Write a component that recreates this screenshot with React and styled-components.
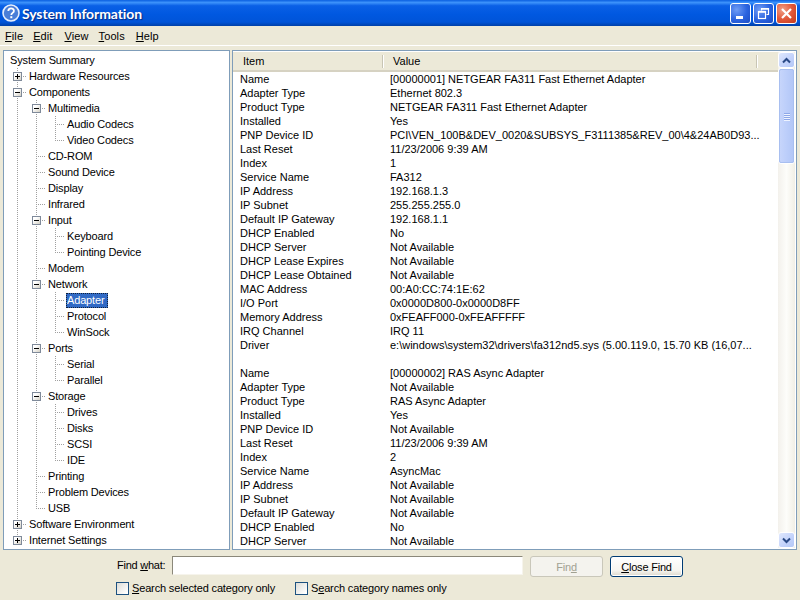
import React from 'react';
import styled, { createGlobalStyle } from 'styled-components';

const GlobalStyle = createGlobalStyle`
  html, body {
    margin: 0;
    padding: 0;
    height: 100%;
    overflow: hidden;
  }
  body {
    font-family: "Liberation Sans", Arial, sans-serif;
    font-size: 11px;
    color: #000;
    background: #ece9d8;
  }
`;

const Win = styled.div`
  width: 800px;
  height: 600px;
  display: flex;
  flex-direction: column;
  background: #ece9d8;
  overflow: hidden;
`;

const TitleBar = styled.div`
  height: 26px;
  flex: none;
  display: flex;
  align-items: center;
  padding: 0 3px 0 2px;
  box-sizing: border-box;
  background: linear-gradient(180deg, #0a5fe0 0%, #3d93fb 10%, #0a60e6 22%, #0058e0 55%, #0054d8 85%, #0040a8 100%);
`;

const TitleText = styled.span`
  margin-left: 2px;
  color: #fff;
  font-family: Lato, "Open Sans", sans-serif;
  font-weight: 700;
  font-size: 14px;
  letter-spacing: -0.1px;
  text-shadow: 1px 1px 1px #0a2a80;
  flex: 1;
`;

const WinButton = styled.div`
  width: 21px;
  height: 21px;
  margin-left: 2px;
  box-sizing: border-box;
  border: 1px solid #fff;
  border-radius: 3px;
  display: flex;
  align-items: center;
  justify-content: center;
  background: ${p => (p.$close
    ? 'radial-gradient(circle at 30% 30%, #f0a088 0%, #e2583a 50%, #c23a1c 100%)'
    : 'radial-gradient(circle at 30% 30%, #6f9cf5 0%, #2a63df 55%, #1c4cc4 100%)')};
`;

const MenuBar = styled.div`
  height: 19px;
  flex: none;
  display: flex;
  align-items: center;
  padding-left: 5px;
  border-bottom: 1px solid #fff;
`;

const MenuItem = styled.span`
  margin-right: ${p => p.$gap}px;
  letter-spacing: 0.1px;
  u { text-underline-offset: 1px; }
`;

const Main = styled.div`
  height: 504px;
  flex: none;
  display: flex;
  padding: 4px 3px 0 3px;
  box-sizing: border-box;
  gap: 2px;
`;

const Panel = styled.div`
  background: #fff;
  border: 1px solid #7f9db9;
  box-sizing: border-box;
  height: 500px;
  overflow: hidden;
`;

const TreePanel = styled(Panel)`
  width: 227px;
  flex: none;
  padding-top: 1px;
`;

const ListPanel = styled(Panel)`
  flex: 1;
  display: flex;
  padding: 1px 1px 1px 0;
`;

const TreeRow = styled.div`
  height: 16px;
  display: flex;
  align-items: stretch;
  padding-left: 4px;
`;

const Cell = styled.div`
  width: 19px;
  flex: none;
  position: relative;
  background-repeat: no-repeat;
  background-image:
    ${p => (p.$line ? 'repeating-linear-gradient(180deg, #a0a0a0 0 1px, transparent 1px 2px)' : 'none')},
    ${p => (p.$stub ? 'repeating-linear-gradient(90deg, #a0a0a0 0 1px, transparent 1px 2px)' : 'none')};
  background-size: 1px ${p => (p.$half ? '9px' : '16px')}, 10px 1px;
  background-position: 9px 0, 9px 8px;
`;

const Expander = styled.div`
  position: absolute;
  left: 5px;
  top: 4px;
  width: 9px;
  height: 9px;
  box-sizing: border-box;
  border: 1px solid #7f8a9a;
  background: linear-gradient(135deg, #fff 30%, #d4d0c4 100%);
  &::before {
    content: "";
    position: absolute;
    left: 1px;
    top: 3px;
    width: 5px;
    height: 1px;
    background: #000;
  }
  &::after {
    content: "";
    display: ${p => (p.$open ? 'none' : 'block')};
    position: absolute;
    left: 3px;
    top: 1px;
    width: 1px;
    height: 5px;
    background: #000;
  }
`;

const TreeLabel = styled.span`
  align-self: center;
  height: 14px;
  line-height: 14px;
  padding: 0 2px;
  white-space: nowrap;
  box-sizing: border-box;
  letter-spacing: -0.15px;
  ${p => p.$selected && `
    background: #316ac5;
    color: #fff;
    height: 15px;
    margin-left: 1px;
    padding: 0 4px 0 1px;
    outline: 1px dotted #10203a;
    outline-offset: -1px;
  `}
`;

const ListBody = styled.div`
  flex: 1;
  overflow: hidden;
  min-width: 0;
`;

const Header = styled.div`
  height: 17px;
  display: flex;
  background: #ece9d8;
  border-bottom: 2px solid #d6d2c2;
  padding-top: 1px;
`;

const HeaderCell = styled.div`
  width: ${p => p.$width}px;
  flex: none;
  box-sizing: border-box;
  padding-left: ${p => p.$pad}px;
  line-height: 17px;
  position: relative;
  &::after {
    content: "";
    position: absolute;
    right: 0;
    top: 2px;
    bottom: 2px;
    width: 1px;
    background: #c8c5b4;
    box-shadow: 1px 0 0 #fff;
  }
`;

const Row = styled.div`
  height: 14px;
  line-height: 14px;
  display: flex;
  white-space: nowrap;
`;

const ItemCell = styled.div`
  width: 157px;
  flex: none;
  padding-left: 7px;
  box-sizing: border-box;
`;

const ValueCell = styled.div`
  flex: 1;
  min-width: 0;
`;

const ScrollBar = styled.div`
  width: 17px;
  flex: none;
  display: flex;
  flex-direction: column;
  background: linear-gradient(90deg, #f3f1ec 0%, #fdfdfa 50%, #f1efe6 100%);
`;

const ScrollButton = styled.div`
  height: 16px;
  flex: none;
  box-sizing: border-box;
  border: 1px solid #fff;
  border-radius: 3px;
  display: flex;
  align-items: center;
  justify-content: center;
  background: linear-gradient(135deg, #e0e8fd 0%, #c2d2fb 60%, #b4c8f6 100%);
`;

const ScrollThumb = styled.div`
  height: 96px;
  flex: none;
  box-sizing: border-box;
  border: 1px solid #fff;
  outline: 1px solid #a8bff0;
  outline-offset: -2px;
  border-radius: 3px;
  display: flex;
  flex-direction: column;
  align-items: center;
  justify-content: center;
  gap: 1px;
  background: linear-gradient(90deg, #c8d6fb 0%, #bccefa 50%, #b2c6f6 100%);
`;

const Grip = styled.span`
  width: 6px;
  height: 1px;
  background: #8ea8e8;
  box-shadow: 0 1px 0 #eef3ff;
`;

const ScrollTrack = styled.div`
  flex: 1;
`;

const FindArea = styled.div`
  flex: 1;
  display: flex;
  flex-direction: column;
  padding: 6px 0 0 116px;
  box-sizing: border-box;
`;

const FindRow = styled.div`
  display: flex;
  align-items: center;
  height: 21px;
`;

const FindLabel = styled.label`
  width: 56px;
  flex: none;
  padding-left: 1px;
  margin-top: -3px;
  white-space: nowrap;
  box-sizing: border-box;
  letter-spacing: -0.25px;
`;

const FindInput = styled.div`
  width: 351px;
  height: 19px;
  align-self: flex-start;
  box-sizing: border-box;
  background: #fff;
  border: 1px solid #f6f4ec;
  border-top: 1px solid #8b887a;
  border-left: 1px solid #8b887a;
  margin-right: 7px;
`;

const Button = styled.div`
  width: 73px;
  height: 21px;
  margin-right: 7px;
  box-sizing: border-box;
  border-radius: 3px;
  display: flex;
  align-items: center;
  justify-content: center;
  letter-spacing: -0.2px;
  ${p => (p.$disabled
    ? `
    border: 1px solid #c9c7ba;
    background: #f4f3ee;
    color: #a1a192;
  `
    : `
    border: 1px solid #003c74;
    background: linear-gradient(180deg, #fff 0%, #f6f5f0 70%, #dcd8cc 100%);
    box-shadow: inset 0 0 0 1px #fff;
  `)}
`;

const CheckRow = styled.div`
  display: flex;
  align-items: center;
  height: 14px;
  margin-top: 4px;
`;

const CheckBox = styled.span`
  width: 13px;
  height: 13px;
  flex: none;
  box-sizing: border-box;
  border: 1px solid #1c5180;
  background: linear-gradient(135deg, #dcdcd7 0%, #fff 90%);
  margin-right: 3px;
`;

const CheckLabel = styled.span`
  width: ${p => p.$width}px;
  flex: none;
  white-space: nowrap;
  letter-spacing: -0.15px;
`;

const tree = [
  { label: 'Hardware Resources' },
  {
    label: 'Components',
    open: true,
    children: [
      { label: 'Multimedia', open: true, children: [{ label: 'Audio Codecs' }, { label: 'Video Codecs' }] },
      { label: 'CD-ROM' },
      { label: 'Sound Device' },
      { label: 'Display' },
      { label: 'Infrared' },
      { label: 'Input', open: true, children: [{ label: 'Keyboard' }, { label: 'Pointing Device' }] },
      { label: 'Modem' },
      {
        label: 'Network',
        open: true,
        children: [{ label: 'Adapter', selected: true }, { label: 'Protocol' }, { label: 'WinSock' }]
      },
      { label: 'Ports', open: true, children: [{ label: 'Serial' }, { label: 'Parallel' }] },
      {
        label: 'Storage',
        open: true,
        children: [{ label: 'Drives' }, { label: 'Disks' }, { label: 'SCSI' }, { label: 'IDE' }]
      },
      { label: 'Printing' },
      { label: 'Problem Devices' },
      { label: 'USB' }
    ]
  },
  { label: 'Software Environment' },
  { label: 'Internet Settings' }
];

const details = [
  ['Name', '[00000001] NETGEAR FA311 Fast Ethernet Adapter'],
  ['Adapter Type', 'Ethernet 802.3'],
  ['Product Type', 'NETGEAR FA311 Fast Ethernet Adapter'],
  ['Installed', 'Yes'],
  ['PNP Device ID', 'PCI\\VEN_100B&DEV_0020&SUBSYS_F3111385&REV_00\\4&24AB0D93...'],
  ['Last Reset', '11/23/2006 9:39 AM'],
  ['Index', '1'],
  ['Service Name', 'FA312'],
  ['IP Address', '192.168.1.3'],
  ['IP Subnet', '255.255.255.0'],
  ['Default IP Gateway', '192.168.1.1'],
  ['DHCP Enabled', 'No'],
  ['DHCP Server', 'Not Available'],
  ['DHCP Lease Expires', 'Not Available'],
  ['DHCP Lease Obtained', 'Not Available'],
  ['MAC Address', '00:A0:CC:74:1E:62'],
  ['I/O Port', '0x0000D800-0x0000D8FF'],
  ['Memory Address', '0xFEAFF000-0xFEAFFFFF'],
  ['IRQ Channel', 'IRQ 11'],
  ['Driver', 'e:\\windows\\system32\\drivers\\fa312nd5.sys (5.00.119.0, 15.70 KB (16,07...'],
  ['', ''],
  ['Name', '[00000002] RAS Async Adapter'],
  ['Adapter Type', 'Not Available'],
  ['Product Type', 'RAS Async Adapter'],
  ['Installed', 'Yes'],
  ['PNP Device ID', 'Not Available'],
  ['Last Reset', '11/23/2006 9:39 AM'],
  ['Index', '2'],
  ['Service Name', 'AsyncMac'],
  ['IP Address', 'Not Available'],
  ['IP Subnet', 'Not Available'],
  ['Default IP Gateway', 'Not Available'],
  ['DHCP Enabled', 'No'],
  ['DHCP Server', 'Not Available']
];

function renderNodes(nodes, guides) {
  return nodes.flatMap((node, i) => {
    const last = i === nodes.length - 1;
    const hasBox = !!node.children || guides.length === 0;
    const row = (
      <TreeRow key={`${guides.length}-${node.label}`}>
        {guides.map((on, g) => (
          <Cell key={g} $line={on} />
        ))}
        <Cell $line $stub $half={last}>
          {hasBox && <Expander $open={node.open} />}
        </Cell>
        <TreeLabel $selected={node.selected}>{node.label}</TreeLabel>
      </TreeRow>
    );
    const kids = node.children ? renderNodes(node.children, [...guides, !last]) : [];
    return [row, ...kids];
  });
}

function HelpIcon() {
  return (
    <svg width="18" height="18" viewBox="0 0 18 18">
      <circle cx="9" cy="9" r="8" fill="#4a7ed8" stroke="#e6eefc" strokeWidth="1.6" />
      <path d="M6.3 7c0-3.4 5.6-3.4 5.6-.1 0 2-2.6 2-2.6 4" fill="none" stroke="#fff" strokeWidth="1.8" />
      <rect x="8.3" y="12.2" width="2" height="2" fill="#fff" />
    </svg>
  );
}

function Chevron({ down }) {
  return (
    <svg width="9" height="7" viewBox="0 0 9 7">
      <path d={down ? 'M1 1.5l3.5 3.5L8 1.5' : 'M1 5.5L4.5 2 8 5.5'} fill="none" stroke="#2a4a86" strokeWidth="2" />
    </svg>
  );
}

export default function App() {
  return (
    <Win>
      <GlobalStyle />
      <TitleBar>
        <HelpIcon />
        <TitleText>System Information</TitleText>
        <WinButton>
          <svg width="13" height="13" viewBox="0 0 13 13">
            <rect x="2" y="9" width="7" height="3" fill="#fff" />
          </svg>
        </WinButton>
        <WinButton>
          <svg width="13" height="13" viewBox="0 0 13 13">
            <path d="M4.5 3.5V1.5h7v6h-2" fill="none" stroke="#fff" strokeWidth="1.2" />
            <rect x="1.5" y="4.5" width="7" height="7" fill="none" stroke="#fff" strokeWidth="1.2" />
            <path d="M1.5 5h7M4.5 2h7" stroke="#fff" strokeWidth="1.6" />
          </svg>
        </WinButton>
        <WinButton $close>
          <svg width="13" height="13" viewBox="0 0 13 13">
            <path d="M2 2l9 9M11 2l-9 9" stroke="#fff" strokeWidth="2.2" />
          </svg>
        </WinButton>
      </TitleBar>
      <MenuBar>
        <MenuItem $gap={10}><u>F</u>ile</MenuItem>
        <MenuItem $gap={12}><u>E</u>dit</MenuItem>
        <MenuItem $gap={10}><u>V</u>iew</MenuItem>
        <MenuItem $gap={11}><u>T</u>ools</MenuItem>
        <MenuItem $gap={0}><u>H</u>elp</MenuItem>
      </MenuBar>
      <Main>
        <TreePanel>
          <TreeRow>
            <TreeLabel>System Summary</TreeLabel>
          </TreeRow>
          {renderNodes(tree, [])}
        </TreePanel>
        <ListPanel>
          <ListBody>
            <Header>
              <HeaderCell $width={150} $pad={10}>Item</HeaderCell>
              <HeaderCell $width={374} $pad={10}>Value</HeaderCell>
            </Header>
            {details.map(([item, value], i) => (
              <Row key={i}>
                <ItemCell>{item}</ItemCell>
                <ValueCell>{value}</ValueCell>
              </Row>
            ))}
          </ListBody>
          <ScrollBar>
            <ScrollButton><Chevron /></ScrollButton>
            <ScrollThumb>
              <Grip /><Grip /><Grip /><Grip />
            </ScrollThumb>
            <ScrollTrack />
            <ScrollButton><Chevron down /></ScrollButton>
          </ScrollBar>
        </ListPanel>
      </Main>
      <FindArea>
        <FindRow>
          <FindLabel>Find <u>w</u>hat:</FindLabel>
          <FindInput />
          <Button $disabled>Fin<u>d</u></Button>
          <Button><span><u>C</u>lose Find</span></Button>
        </FindRow>
        <CheckRow>
          <CheckBox />
          <CheckLabel $width={163}><u>S</u>earch selected category only</CheckLabel>
          <CheckBox />
          <CheckLabel $width={160}>S<u>e</u>arch category names only</CheckLabel>
        </CheckRow>
      </FindArea>
    </Win>
  );
}
